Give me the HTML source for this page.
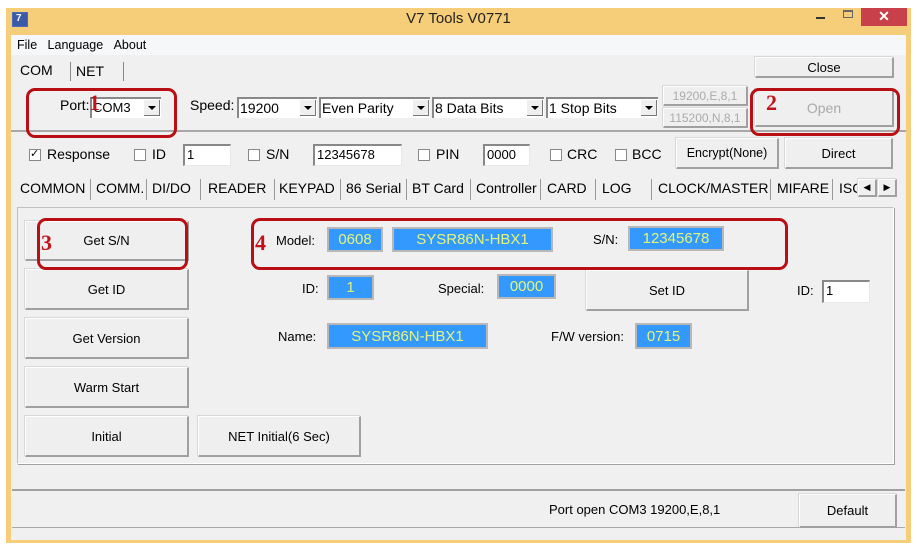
<!DOCTYPE html>
<html><head><meta charset="utf-8"><style>
*{box-sizing:border-box;margin:0;padding:0}
body{width:917px;height:552px;background:#fff;position:relative;overflow:hidden;font-family:"Liberation Sans",sans-serif;font-size:13px;color:#000}
.a{position:absolute}
.btn{position:absolute;background:#efefef;border:1px solid #fff;border-right:2px solid #a0a0a0;border-bottom:2px solid #a0a0a0;box-shadow:-1px -1px 0 #d8d8d8;display:flex;align-items:center;justify-content:center;font-size:13px}
.fld{position:absolute;background:#3399ff;border:2px solid #b8b8b8;color:#e4f57a;font-size:15px;display:flex;align-items:center;justify-content:center}
.inp{position:absolute;background:#fff;border-top:2px solid #888;border-left:2px solid #888;border-right:1px solid #e8e8e8;border-bottom:1px solid #e8e8e8;font-size:13px;padding-left:2px;line-height:18px}
.cmb{position:absolute;background:#fff;border-top:2px solid #888;border-left:2px solid #888;height:21px;font-size:13px;padding-left:1px;line-height:18px}
.cmb i{position:absolute;right:1px;top:1px;width:16px;height:16px;background:#efefef;border-right:1px solid #777;border-bottom:1px solid #777}
.cmb i:after{content:"";position:absolute;left:4px;top:6px;border-left:4px solid transparent;border-right:4px solid transparent;border-top:4px solid #000}
.cb{position:absolute;width:12px;height:12px;border:1px solid #888;background:#fff}
.red{position:absolute;border:3px solid #b80f14;border-radius:9px}
.num{position:absolute;color:#c0141a;font-family:"Liberation Serif",serif;font-weight:bold;font-size:22px}
.tab{position:absolute;top:180px;font-size:14px}
.sep{position:absolute;top:179px;width:1px;height:21px;background:#999}
</style></head><body>
<div class="a" style="left:6px;top:8px;width:905px;height:535px;background:#f6cd78"></div>
<div class="a" style="left:11px;top:35px;width:895px;height:505px;background:#f0f0f0"></div>
<div class="a" style="left:12px;top:12px;width:16px;height:15px;background:#3b5aa8;border:1px solid #4a6ab8"><span style="color:#fff;font-size:10px;font-weight:bold;position:absolute;left:3px;top:0">7</span></div>
<div class="a" style="left:0;width:917px;top:10px;text-align:center;font-size:15px;color:#222">V7 Tools V0771</div>
<div class="a" style="left:816px;top:17px;width:9px;height:2px;background:#333"></div>
<div class="a" style="left:843px;top:10px;width:10px;height:8px;border:1px solid #666;border-top-width:2px"></div>
<div class="a" style="left:861px;top:8px;width:46px;height:18px;background:#c8404a;color:#fff;text-align:center;font-size:14px;font-weight:bold;line-height:17px">✕</div>
<div class="a" style="left:11px;top:35px;width:895px;height:20px;background:#f6f7f9"></div>
<div class="a" style="left:17px;top:38px;font-size:12.5px">File&nbsp;&nbsp;&nbsp;Language&nbsp;&nbsp;&nbsp;About</div>
<div class="a" style="left:20px;top:62px;font-size:14px">COM</div>
<div class="a" style="left:70px;top:62px;width:1px;height:19px;background:#888"></div>
<div class="a" style="left:76px;top:63px;font-size:14px">NET</div>
<div class="a" style="left:123px;top:62px;width:1px;height:19px;background:#888"></div>
<div class="btn" style="left:755px;top:57px;width:139px;height:21px">Close</div>
<div class="a" style="left:60px;top:97px;font-size:14px">Port:</div>
<div class="cmb" style="left:90px;top:97px;width:71px">COM3<i></i></div>
<div class="a" style="left:190px;top:97px;font-size:14px">Speed:</div>
<div class="cmb" style="left:237px;top:97px;width:80px;font-size:14px">19200<i></i></div>
<div class="cmb" style="left:319px;top:97px;width:111px;font-size:14px">Even Parity<i></i></div>
<div class="cmb" style="left:432px;top:97px;width:112px;font-size:14px">8 Data Bits<i></i></div>
<div class="cmb" style="left:546px;top:97px;width:112px;font-size:14px">1 Stop Bits<i></i></div>
<div class="btn" style="left:663px;top:86px;width:85px;height:20px;color:#aaa;font-size:12px">19200,E,8,1</div>
<div class="btn" style="left:663px;top:108px;width:85px;height:20px;color:#aaa;font-size:12px">115200,N,8,1</div>
<div class="btn" style="left:755px;top:89px;width:139px;height:38px;color:#aaa;font-size:14px">Open</div>
<div class="a" style="left:11px;top:130px;width:895px;height:2px;background:#a8a8a8"></div>
<div class="cb" style="left:29px;top:149px;font-size:11px;line-height:9px">✓</div>
<div class="a" style="left:47px;top:146px;font-size:14px">Response</div>
<div class="cb" style="left:134px;top:149px"></div><div class="a" style="left:152px;top:146px;font-size:14px">ID</div>
<div class="inp" style="left:183px;top:144px;width:48px;height:22px">1</div>
<div class="cb" style="left:248px;top:149px"></div><div class="a" style="left:266px;top:146px;font-size:14px">S/N</div>
<div class="inp" style="left:313px;top:144px;width:89px;height:22px">12345678</div>
<div class="cb" style="left:418px;top:149px"></div><div class="a" style="left:436px;top:146px;font-size:14px">PIN</div>
<div class="inp" style="left:483px;top:144px;width:47px;height:22px">0000</div>
<div class="cb" style="left:550px;top:149px"></div><div class="a" style="left:567px;top:146px;font-size:14px">CRC</div>
<div class="cb" style="left:615px;top:149px"></div><div class="a" style="left:632px;top:146px;font-size:14px">BCC</div>
<div class="btn" style="left:676px;top:138px;width:103px;height:31px;font-size:12.5px">Encrypt(None)</div>
<div class="btn" style="left:785px;top:138px;width:108px;height:31px">Direct</div>
<div class="tab" style="left:20px">COMMON</div><div class="sep" style="left:90px"></div>
<div class="tab" style="left:96px">COMM.</div><div class="sep" style="left:146px"></div>
<div class="tab" style="left:152px">DI/DO</div><div class="sep" style="left:200px"></div>
<div class="tab" style="left:208px">READER</div><div class="sep" style="left:274px"></div>
<div class="tab" style="left:279px">KEYPAD</div><div class="sep" style="left:340px"></div>
<div class="tab" style="left:346px">86 Serial</div><div class="sep" style="left:406px"></div>
<div class="tab" style="left:412px">BT Card</div><div class="sep" style="left:470px"></div>
<div class="tab" style="left:476px">Controller</div><div class="sep" style="left:540px"></div>
<div class="tab" style="left:547px">CARD</div><div class="sep" style="left:595px"></div>
<div class="tab" style="left:602px">LOG</div><div class="sep" style="left:651px"></div>
<div class="tab" style="left:658px">CLOCK/MASTER</div><div class="sep" style="left:770px"></div>
<div class="tab" style="left:777px">MIFARE</div><div class="sep" style="left:832px"></div>
<div class="tab" style="left:839px">ISC</div>
<div class="btn" style="left:858px;top:179px;width:19px;height:18px;font-size:9px">◀</div>
<div class="btn" style="left:878px;top:179px;width:19px;height:18px;font-size:9px">▶</div>
<div class="a" style="left:17px;top:207px;width:877px;height:257px;border:1px solid #c0c0c0;border-right-color:#fff;border-bottom-color:#fff;box-shadow:1px 1px 0 #a0a0a0"></div>
<div class="btn" style="left:25px;top:221px;width:164px;height:40px">Get S/N</div>
<div class="btn" style="left:25px;top:269px;width:164px;height:41px">Get ID</div>
<div class="btn" style="left:25px;top:318px;width:164px;height:41px">Get Version</div>
<div class="btn" style="left:25px;top:367px;width:164px;height:41px">Warm Start</div>
<div class="btn" style="left:25px;top:416px;width:164px;height:41px">Initial</div>
<div class="btn" style="left:198px;top:416px;width:163px;height:41px">NET Initial(6 Sec)</div>
<div class="a" style="left:276px;top:233px">Model:</div>
<div class="fld" style="left:327px;top:227px;width:56px;height:25px">0608</div>
<div class="fld" style="left:392px;top:227px;width:161px;height:25px">SYSR86N-HBX1</div>
<div class="a" style="left:593px;top:232px">S/N:</div>
<div class="fld" style="left:628px;top:226px;width:96px;height:25px">12345678</div>
<div class="a" style="left:302px;top:281px">ID:</div>
<div class="fld" style="left:327px;top:275px;width:47px;height:25px">1</div>
<div class="a" style="left:438px;top:281px">Special:</div>
<div class="fld" style="left:497px;top:274px;width:59px;height:25px">0000</div>
<div class="btn" style="left:586px;top:270px;width:163px;height:41px">Set ID</div>
<div class="a" style="left:797px;top:283px">ID:</div>
<div class="inp" style="left:822px;top:280px;width:48px;height:23px">1</div>
<div class="a" style="left:278px;top:329px">Name:</div>
<div class="fld" style="left:327px;top:323px;width:161px;height:26px">SYSR86N-HBX1</div>
<div class="a" style="left:551px;top:329px">F/W version:</div>
<div class="fld" style="left:635px;top:323px;width:57px;height:26px">0715</div>
<div class="a" style="left:12px;top:489px;width:893px;height:2px;background:#a0a0a0"></div>
<div class="a" style="left:12px;top:527px;width:893px;height:1px;background:#a8a8a8"></div>
<div class="a" style="left:549px;top:502px">Port open COM3 19200,E,8,1</div>
<div class="btn" style="left:799px;top:494px;width:98px;height:34px">Default</div>
<div class="red" style="left:26px;top:88px;width:151px;height:50px"></div>
<div class="num" style="left:89px;top:90px">1</div>
<div class="red" style="left:750px;top:88px;width:150px;height:48px"></div>
<div class="num" style="left:766px;top:90px">2</div>
<div class="red" style="left:37px;top:218px;width:151px;height:52px"></div>
<div class="num" style="left:41px;top:230px">3</div>
<div class="red" style="left:251px;top:218px;width:537px;height:52px"></div>
<div class="num" style="left:255px;top:230px">4</div>
</body></html>
